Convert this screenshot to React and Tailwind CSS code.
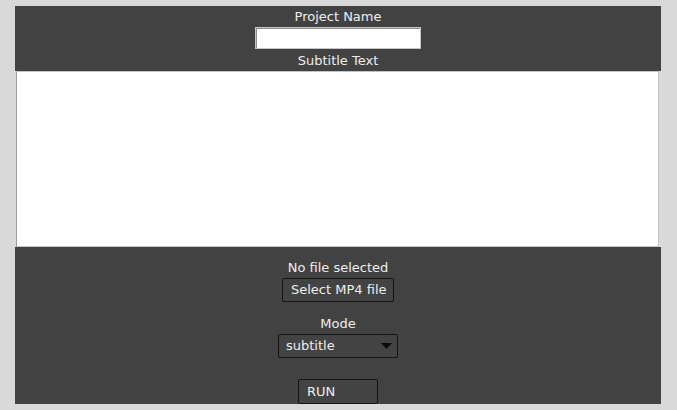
import { useState } from 'react';

const App = () => {
    const [projectName, setProjectName] = useState('');
    const [subtitle, setSubtitle] = useState('');

    return (
        <div
            className="min-h-[410px] bg-[#d9d9d9] pt-[6px] pl-[15px] text-[13px] text-[#eeeeee]"
            style={{ fontFamily: '"DejaVu Sans", sans-serif' }}
        >
            <div className="w-[646px]">
                {/* top panel */}
                <div className="bg-[#424242] flex flex-col items-center pt-[3px] pb-[3px]">
                    <label className="leading-[15px]">Project Name</label>
                    <input
                        type="text"
                        className="mt-[3px] w-[166px] h-[22px] bg-white border border-[#c6c6c6] shadow-[inset_1px_1px_0_#8e8e8e] outline-none px-1 text-black text-[13px]"
                        value={projectName}
                        onChange={(e) => setProjectName(e.target.value)}
                    />
                    <label className="mt-[4px] leading-[15px]">Subtitle Text</label>
                </div>

                <textarea
                    className="block ml-[1px] w-[643px] h-[176px] resize-none bg-white border border-[#c4c4c4] border-l-[#9c9c9c] outline-none text-black p-1"
                    value={subtitle}
                    onChange={(e) => setSubtitle(e.target.value)}
                />

                {/* bottom panel */}
                <div className="bg-[#424242] flex flex-col items-center pt-[13px]">
                    <p className="leading-[15px]">No file selected</p>
                    <button className="mt-[3px] w-[112px] h-[24px] border border-[#141414] rounded-[2px] bg-[#434343] text-left pl-[8px] leading-[20px] text-[#eeeeee]">
                        Select MP4 file
                    </button>

                    <p className="mt-[14px] leading-[15px]">Mode</p>
                    <div className="mt-[3px] w-[120px] h-[24px] border border-[#141414] rounded-[2px] bg-[#434343] flex items-center justify-between pl-[7px] pr-[5px]">
                        <span className="leading-[20px]">subtitle</span>
                        <svg width="11" height="6" viewBox="0 0 11 6">
                            <polygon points="0,0 11,0 5.5,6" fill="#0a0a0a" />
                        </svg>
                    </div>

                    <button className="mt-[21px] w-[80px] h-[25px] border border-[#141414] rounded-[2px] bg-[#434343] text-left pl-[8px] leading-[22px] text-[#eeeeee]">
                        RUN
                    </button>
                </div>
            </div>
        </div>
    );
};

export default App;
